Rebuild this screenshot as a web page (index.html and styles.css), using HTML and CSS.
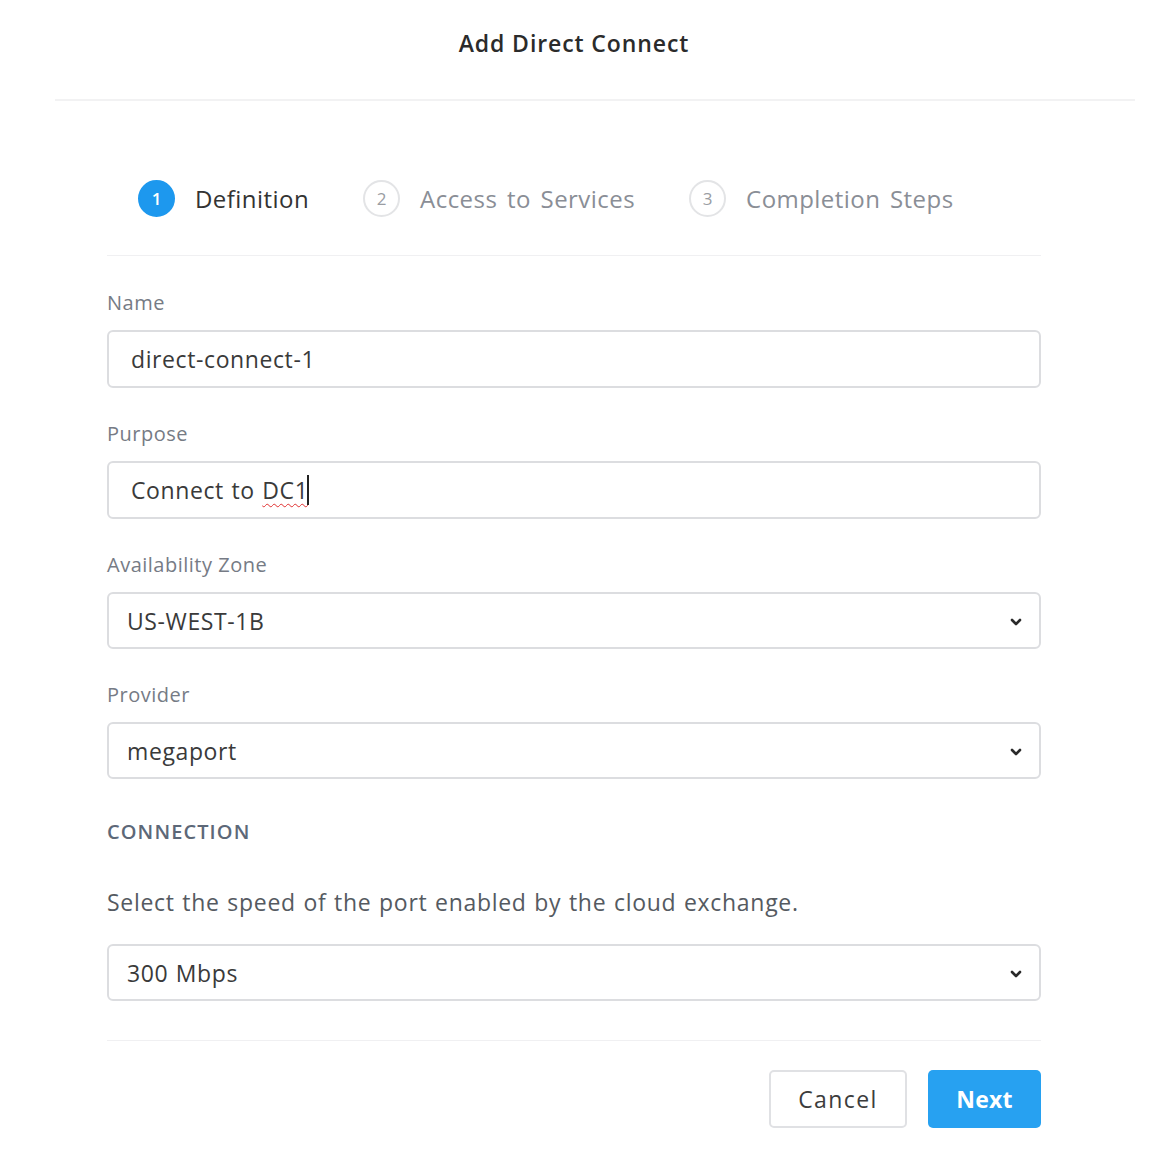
FILE: index.html
```html
<!DOCTYPE html>
<html lang="en">
<head>
<meta charset="utf-8">
<title>Add Direct Connect</title>
<link rel="stylesheet" href="styles.css">
</head>
<body>
<div class="modal">
  <header class="header">
    <h1 class="title">Add Direct Connect</h1>
  </header>
  <main class="body">
    <nav class="steps">
      <div class="step active"><span class="num">1</span><span class="step-label">Definition</span></div>
      <div class="step"><span class="num">2</span><span class="step-label">Access to Services</span></div>
      <div class="step"><span class="num">3</span><span class="step-label">Completion Steps</span></div>
    </nav>
    <form class="form">
      <div class="field">
        <label class="label">Name</label>
        <div class="input"><span>direct-connect-1</span></div>
      </div>
      <div class="field">
        <label class="label">Purpose</label>
        <div class="input"><span>Connect to <span class="spell">DC1</span></span><span class="caret"></span></div>
      </div>
      <div class="field">
        <label class="label">Availability Zone</label>
        <div class="select"><span>US-WEST-1B</span>
          <svg class="chev" width="12" height="8" viewBox="0 0 12 8"><path d="M2 2 L6 6 L10 2" fill="none" stroke="#2a2a2a" stroke-width="2.6" stroke-linecap="round" stroke-linejoin="round"/></svg>
        </div>
      </div>
      <div class="field">
        <label class="label">Provider</label>
        <div class="select"><span>megaport</span>
          <svg class="chev" width="12" height="8" viewBox="0 0 12 8"><path d="M2 2 L6 6 L10 2" fill="none" stroke="#2a2a2a" stroke-width="2.6" stroke-linecap="round" stroke-linejoin="round"/></svg>
        </div>
      </div>
      <div class="section">CONNECTION</div>
      <p class="desc">Select the speed of the port enabled by the cloud exchange.</p>
      <div class="select"><span>300 Mbps</span>
        <svg class="chev" width="12" height="8" viewBox="0 0 12 8"><path d="M2 2 L6 6 L10 2" fill="none" stroke="#2a2a2a" stroke-width="2.6" stroke-linecap="round" stroke-linejoin="round"/></svg>
      </div>
    </form>
    <footer class="footer">
      <button class="btn cancel" type="button">Cancel</button>
      <button class="btn next" type="button">Next</button>
    </footer>
  </main>
</div>
</body>
</html>
```
FILE: styles.css
```css
* { box-sizing: border-box; }
html, body { margin: 0; padding: 0; background: #fff; }
body {
  font-family: "Open Sans", "Liberation Sans", sans-serif;
  color: #333;
}
.modal { width: 1162px; }
.header {
  margin: 0 27px 0 55px;
  height: 101px;
  border-bottom: 2px solid #f2f2f3;
  display: flex;
  justify-content: center;
  padding-right: 42px;
}
.title {
  margin: 0;
  padding-top: 28px;
  font-size: 23px;
  font-weight: 600;
  line-height: 30px;
  color: #2b2b2b;
  letter-spacing: 0.9px;
}
.body {
  margin-left: 107px;
  width: 934px;
}
.steps {
  display: flex;
  align-items: flex-start;
  padding: 79px 0 0 31px;
  height: 155px;
  border-bottom: 1px solid #f0f0f2;
}
.step {
  display: flex;
  align-items: center;
  margin-right: 54px;
  color: #8a8e96;
}
.step .num {
  width: 37px;
  height: 37px;
  border-radius: 50%;
  border: 2px solid #e3e4e6;
  display: flex;
  align-items: center;
  justify-content: center;
  font-size: 17px;
  color: #9a9da3;
  margin-right: 20px;
}
.step.active .num {
  background: #1d98ee;
  border-color: #1d98ee;
  color: #fff;
  font-weight: 600;
}
.step-label {
  font-size: 24px;
  line-height: 32px;
  letter-spacing: 0.45px;
  word-spacing: 3px;
}
.step.active .step-label { color: #333; }
.form {
  padding-top: 35px;
  display: flex;
  flex-direction: column;
}
.field { display: flex; flex-direction: column; margin-bottom: 34px; }
.field:nth-child(4) { margin-bottom: 41px; }
.label {
  font-size: 20px;
  line-height: 24px;
  color: #767b85;
  margin-bottom: 15px;
  letter-spacing: 0.5px;
}
.input, .select {
  height: 58px;
  border: 2px solid #dcdde0;
  border-radius: 6px;
  display: flex;
  align-items: center;
  font-size: 23px;
  color: #3a3a3a;
  background: #fff;
  letter-spacing: 0.6px;
  word-spacing: 1px;
}
.input { padding-left: 22px; }
.select { padding: 0 17px 0 18px; justify-content: space-between; height: 57px; }
.chev { margin-top: 2px; }
.spell {
  text-decoration: underline wavy #e03030;
  text-decoration-thickness: 1px;
  text-underline-offset: 4px;
}
.caret {
  display: inline-block;
  width: 2px;
  height: 30px;
  background: #222;
  margin-left: -1px;
}
.section {
  font-size: 20px;
  line-height: 24px;
  font-weight: 600;
  color: #5d6878;
  letter-spacing: 1.1px;
}
.desc {
  margin: 44px 0 27px;
  font-size: 23px;
  line-height: 29px;
  color: #555a61;
  letter-spacing: 0.7px;
  word-spacing: 1px;
}
.footer {
  margin-top: 39px;
  border-top: 1px solid #f0f0f2;
  padding-top: 29px;
  display: flex;
  justify-content: flex-end;
  gap: 21px;
}
.btn {
  height: 58px;
  border-radius: 5px;
  font-family: inherit;
  font-size: 23px;
  cursor: pointer;
}
.cancel {
  width: 138px;
  background: #fff;
  border: 2px solid #e0e1e4;
  color: #3c3c3c;
  letter-spacing: 1.4px;
}
.next {
  width: 113px;
  background: #27a1f1;
  border: none;
  color: #fff;
  font-weight: 700;
  letter-spacing: 0.2px;
}
```
